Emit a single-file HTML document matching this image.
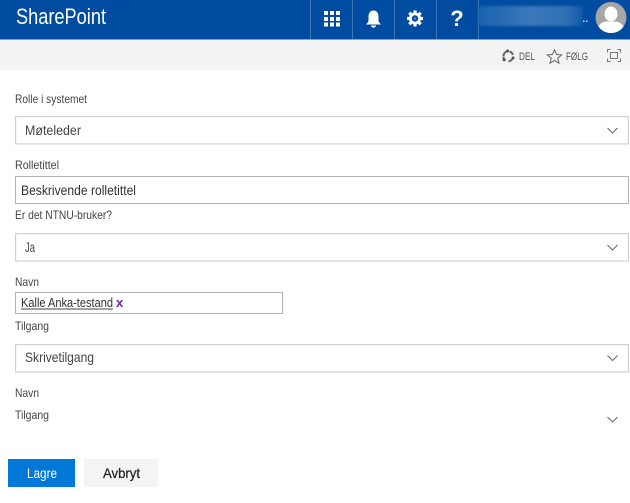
<!DOCTYPE html>
<html>
<head>
<meta charset="utf-8">
<style>
html,body{margin:0;padding:0;background:#fff;width:630px;height:503px;overflow:hidden}
svg{display:block}
text{font-family:"Liberation Sans",sans-serif}
</style>
</head>
<body>
<svg width="630" height="503" viewBox="0 0 630 503" xmlns="http://www.w3.org/2000/svg">
<defs>
<filter id="b1" x="-20%" y="-50%" width="140%" height="200%"><feGaussianBlur stdDeviation="1.2"/></filter>
<filter id="b2" x="-10%" y="-10%" width="120%" height="120%"><feGaussianBlur stdDeviation="0.35"/></filter>
<linearGradient id="g" x1="0" x2="1" y1="0" y2="0"><stop offset="0" stop-color="#1a62ae"/><stop offset="0.5" stop-color="#3a78ba"/><stop offset="0.85" stop-color="#2f70b4"/><stop offset="1" stop-color="#0f58a6"/></linearGradient>
<clipPath id="av"><circle cx="611" cy="17.5" r="15.5"/></clipPath>
</defs>

<!-- header -->
<rect x="0" y="0" width="630" height="39" fill="#004ca0"/>
<rect x="0" y="39" width="630" height="1" fill="#7fa6d0"/>
<rect x="0" y="40" width="630" height="30" fill="#f3f3f3"/>
<g filter="url(#b2)">
<text x="16" y="24" font-size="22" fill="#fff" textLength="90" lengthAdjust="spacingAndGlyphs">SharePoint</text>
</g>

<g fill="#3f76b6">
<rect x="310" y="0" width="1" height="39"/>
<rect x="352" y="0" width="1" height="39"/>
<rect x="394" y="0" width="1" height="39"/>
<rect x="436" y="0" width="1" height="39"/>
<rect x="478" y="0" width="1" height="39"/>
</g>

<!-- waffle -->
<g fill="#fff" filter="url(#b2)">
<rect x="324" y="11" width="4" height="4"/><rect x="330" y="11" width="4" height="4"/><rect x="336" y="11" width="4" height="4"/>
<rect x="324" y="17" width="4" height="4"/><rect x="330" y="17" width="4" height="4"/><rect x="336" y="17" width="4" height="4"/>
<rect x="324" y="22.500" width="4" height="4"/><rect x="330" y="22.500" width="4" height="4"/><rect x="336" y="22.500" width="4" height="4"/>
</g>
<!-- bell -->
<g fill="#fff" filter="url(#b2)">
<path d="M373.500 10.500c-3.600 0-5 2.900-5 6v3.800c0 1.700-1.200 3-2.500 4.200h15c-1.300-1.200-2.500-2.500-2.500-4.200v-3.800c0-3.100-1.400-6-5-6z"/>
<path d="M371 25.500a2.500 2.200 0 0 0 5 0z"/>
</g>
<!-- gear -->
<g filter="url(#b2)">
<g stroke="#fff" stroke-width="3.200">
<path d="M415 10.500v16M407 18.500h16M409.300 12.800l11.400 11.400M420.700 12.800l-11.400 11.400"/>
</g>
<circle cx="415" cy="18.500" r="6" fill="#fff"/>
<circle cx="415" cy="18.500" r="3.200" fill="#004ca0"/>
<circle cx="415" cy="18.500" r="1.200" fill="#5c8cc4"/>
</g>
<!-- help -->
<g filter="url(#b2)">
<text x="457" y="26" font-size="22" font-weight="bold" fill="#fff" text-anchor="middle">?</text>
</g>

<!-- blurred name -->
<rect x="478" y="6" width="105" height="20" fill="url(#g)" filter="url(#b1)"/>
<rect x="583" y="20.500" width="1.500" height="1.500" fill="#c8d8ea"/><rect x="586" y="20.500" width="1.500" height="1.500" fill="#c8d8ea"/>

<!-- avatar -->
<circle cx="611" cy="17.500" r="15.500" fill="#a6a6a6"/>
<g clip-path="url(#av)" fill="#fff">
<ellipse cx="611" cy="14" rx="6.500" ry="7.500"/>
<path d="M597 33c0-7 4-11 9-11.500h10c5 .5 9 4.500 9 11.500z"/>
</g>

<!-- toolbar -->
<g filter="url(#b2)">
<g fill="none" stroke="#666" stroke-width="2">
<path d="M503.500 56a4.700 4.700 0 0 1 3-4.300M509.500 51.400a4.700 4.700 0 0 1 3.300 3.600M512.300 59a4.700 4.700 0 0 1-3.800 2.200M505.500 60.500a4.700 4.700 0 0 1-2-4"/>
</g>
<g fill="#555"><circle cx="507.500" cy="51" r="1.500"/><circle cx="513" cy="58" r="1.500"/><circle cx="504" cy="59.800" r="1.500"/></g>
<text x="519" y="60" font-size="11" fill="#555" textLength="16" lengthAdjust="spacingAndGlyphs">DEL</text>
<path d="M554.500 49.800l2 4.700 5.200.4-4 3.300 1.300 5-4.500-2.700-4.500 2.700 1.300-5-4-3.300 5.200-.4z" fill="none" stroke="#666" stroke-width="1"/>
<text x="566" y="60" font-size="11" fill="#555" textLength="22" lengthAdjust="spacingAndGlyphs">FØLG</text>
<g fill="none" stroke="#777" stroke-width="1">
<rect x="610.500" y="52.500" width="7" height="6"/>
<path d="M607.500 52.500v-3h3M617.500 49.500h3v3M620.500 58.500v3h-3M610.500 61.500h-3v-3"/>
</g>
</g>

<!-- form fields -->
<g fill="#fff" stroke="#d2d2d2" stroke-width="1.200">
<rect x="15.600" y="116.600" width="612.800" height="27.300"/>
<rect x="15.600" y="233.600" width="612.800" height="27.300"/>
<rect x="15.600" y="344.600" width="612.800" height="27.300"/>
</g>
<rect x="15.500" y="176.500" width="613" height="27" fill="#fff" stroke="#b4b4b4" stroke-width="1"/>
<rect x="15.500" y="292.500" width="267" height="21" fill="#fff" stroke="#b4b4b4" stroke-width="1"/>

<!-- chevrons -->
<g fill="none" stroke="#666" stroke-width="1">
<path d="M607.500 128l5 5 5-5"/>
<path d="M607.500 245l5 5 5-5"/>
<path d="M607.500 355.500l5 5 5-5"/>
<path d="M607.500 417l5 5 5-5"/>
</g>

<!-- text -->
<g filter="url(#b2)">
<g fill="#444">
<text x="15" y="103" font-size="12" textLength="72" lengthAdjust="spacingAndGlyphs">Rolle i systemet</text>
<text x="25" y="135" font-size="14" textLength="56" lengthAdjust="spacingAndGlyphs">Møteleder</text>
<text x="15" y="169" font-size="12" textLength="44" lengthAdjust="spacingAndGlyphs">Rolletittel</text>
<text x="15" y="219" font-size="12" textLength="97" lengthAdjust="spacingAndGlyphs">Er det NTNU-bruker?</text>
<text x="25" y="252" font-size="14" textLength="10" lengthAdjust="spacingAndGlyphs">Ja</text>
<text x="15" y="286" font-size="12" textLength="24" lengthAdjust="spacingAndGlyphs">Navn</text>
<text x="15" y="330" font-size="12" textLength="34" lengthAdjust="spacingAndGlyphs">Tilgang</text>
<text x="25" y="362" font-size="14" textLength="69" lengthAdjust="spacingAndGlyphs">Skrivetilgang</text>
<text x="15" y="397" font-size="12" textLength="24" lengthAdjust="spacingAndGlyphs">Navn</text>
<text x="15" y="419" font-size="12" textLength="34" lengthAdjust="spacingAndGlyphs">Tilgang</text>
</g>
<text x="21" y="195" font-size="14" fill="#333" textLength="115" lengthAdjust="spacingAndGlyphs">Beskrivende rolletittel</text>
<text x="21" y="307" font-size="13" fill="#333" textLength="92" lengthAdjust="spacingAndGlyphs">Kalle Anka-testand</text>
<rect x="21" y="308.500" width="92" height="1" fill="#444"/>
<text x="116" y="307" font-size="13" font-weight="bold" fill="#6b2a9a">x</text>
</g>

<!-- buttons -->
<rect x="8" y="459" width="67" height="28" fill="#0078d7"/>
<rect x="84" y="459" width="74" height="28" fill="#f4f4f4"/>
<g filter="url(#b2)">
<text x="27" y="478" font-size="14" fill="#fff" textLength="30" lengthAdjust="spacingAndGlyphs">Lagre</text>
<text x="103" y="478" font-size="14" fill="#222" stroke="#222" stroke-width="0.25" textLength="37" lengthAdjust="spacingAndGlyphs">Avbryt</text>
</g>
</svg>
</body>
</html>
